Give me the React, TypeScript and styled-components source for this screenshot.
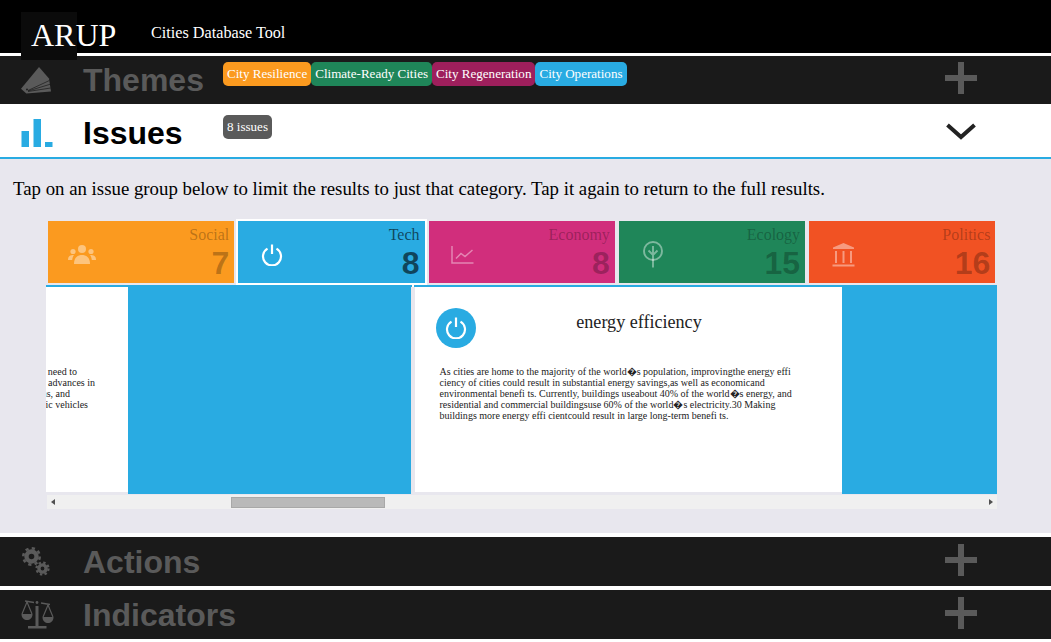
import React from "react";
import styled, { createGlobalStyle } from "styled-components";

const GlobalStyle = createGlobalStyle`
  html, body {
    margin: 0;
    padding: 0;
    background: #fff;
    overflow: hidden;
    font-family: "Liberation Serif", "Times New Roman", serif;
  }
`;

const BLUE = "#29abe2";

function FanIcon() {
  return (
    <svg width="30" height="27" viewBox="0 0 30 27">
      <polygon points="18,0 28,11.5 30,24.5 5.3,26.5 0,21.7" fill="#5a5a5a" />
      <g stroke="#1a1a1a" strokeWidth="0.7" fill="none">
        <line x1="7" y1="23.5" x2="28.4" y2="13.5" />
        <line x1="7" y1="24" x2="29" y2="17.3" />
        <line x1="7" y1="24.5" x2="29.6" y2="21" />
      </g>
      <circle cx="6" cy="22.5" r="0.9" fill="#1a1a1a" />
    </svg>
  );
}

function BarsIcon() {
  return (
    <svg width="32" height="28" viewBox="0 0 32 28" fill={BLUE}>
      <rect x="0.5" y="12" width="7.5" height="16" />
      <rect x="12.5" y="0" width="7.5" height="28" />
      <rect x="24" y="23" width="7.5" height="5" />
    </svg>
  );
}

function GearsIcon() {
  return (
    <svg width="30" height="30" viewBox="0 0 30 30" fill="none" stroke="#5a5a5a">
      <circle cx="10.5" cy="9.5" r="5" strokeWidth="4.4" />
      <circle cx="10.5" cy="9.5" r="8.2" strokeWidth="2.6" strokeDasharray="3.2 3.24" />
      <circle cx="21.5" cy="21.5" r="3.6" strokeWidth="3.4" />
      <circle cx="21.5" cy="21.5" r="6" strokeWidth="2.2" strokeDasharray="2.4 2.31" />
    </svg>
  );
}

function ScalesIcon() {
  return (
    <svg width="33" height="29" viewBox="0 0 33 29" fill="none" stroke="#5a5a5a" strokeWidth="1.2">
      <line x1="4" y1="1" x2="13" y2="2.5" strokeWidth="1.6" />
      <line x1="20" y1="3" x2="29" y2="4.5" strokeWidth="1.6" />
      <circle cx="16" cy="2.5" r="1.4" fill="#5a5a5a" stroke="none" />
      <rect x="14.5" y="6" width="3" height="20" fill="#5a5a5a" stroke="none" />
      <rect x="7" y="26" width="18.5" height="2.5" fill="#5a5a5a" stroke="none" />
      <path d="M6 2 L1 14 M6 2 L11 14" />
      <path d="M27 5 L22 17 M27 5 L32 17" />
      <path d="M0.5 14 H11.5 C11.5 22 0.5 22 0.5 14Z" fill="#5a5a5a" stroke="none" />
      <path d="M21.5 17 H32.5 C32.5 25 21.5 25 21.5 17Z" fill="#5a5a5a" stroke="none" />
    </svg>
  );
}

function PlusIcon() {
  return (
    <svg width="32" height="32" viewBox="0 0 32 32" fill="#5a5a5a">
      <rect x="13" y="0" width="6" height="32" />
      <rect x="0" y="13" width="32" height="6" />
    </svg>
  );
}

function ChevronIcon() {
  return (
    <svg width="30" height="17" viewBox="0 0 30 17" fill="none" stroke="#222" strokeWidth="4">
      <path d="M1.5 2 L15 14 L28.5 2" />
    </svg>
  );
}

function PeopleIcon() {
  return (
    <svg width="28" height="20" viewBox="0 0 28 20" fill="currentColor">
      <circle cx="14" cy="4" r="4" />
      <circle cx="5" cy="6.5" r="2.6" />
      <circle cx="23" cy="6.5" r="2.6" />
      <path d="M6 19 C6 12 10 10 14 10 C18 10 22 12 22 19Z" />
      <path d="M0 15 C0 11 2 10 6 10 C5 11.5 4.5 12.5 4.2 15Z" />
      <path d="M28 15 C28 11 26 10 22 10 C23 11.5 23.5 12.5 23.8 15Z" />
    </svg>
  );
}

function PowerIcon({ size = 22 }: { size?: number }) {
  return (
    <svg width={size} height={size} viewBox="0 0 22 22" fill="none" stroke="currentColor" strokeWidth="2.2">
      <path d="M6.5 4.6 A9 9 0 1 0 15.5 4.6" />
      <line x1="11" y1="0.5" x2="11" y2="10" />
    </svg>
  );
}

function ChartIcon() {
  return (
    <svg width="23" height="18" viewBox="0 0 23 18" fill="none" stroke="currentColor" strokeWidth="1.5">
      <path d="M1 0 V17 H22.5" />
      <path d="M5 12.5 L10 7.5 L14 10.5 L21.5 4" />
    </svg>
  );
}

function TreeIcon() {
  return (
    <svg width="22" height="27" viewBox="0 0 22 27" fill="none" stroke="currentColor" strokeWidth="1.9">
      <circle cx="11" cy="10" r="9" />
      <path d="M11 5 V26.5 M6.5 9.5 L11 14 L15.5 9.5" />
    </svg>
  );
}

function BankIcon() {
  return (
    <svg width="23" height="24" viewBox="0 0 23 24" fill="currentColor">
      <path d="M11.5 0 L22 4.5 V6 H1 V4.5Z" />
      <rect x="3" y="8" width="2" height="12" />
      <rect x="10.5" y="8" width="2" height="12" />
      <rect x="18" y="8" width="2" height="12" />
      <rect x="0.5" y="21.5" width="22" height="2" />
    </svg>
  );
}

const Page = styled.div`
  width: 1051px;
  height: 642px;
  overflow: hidden;
  background: #fff;
`;

const Header = styled.header`
  height: 53px;
  background: #000;
  color: #fff;
  display: flex;
  align-items: flex-start;
`;

const Logo = styled.div`
  width: 56px;
  height: 48px;
  margin: 12px 0 0 21px;
  background: #0b0b0b;
  font-size: 32px;
  line-height: 47px;
  padding-left: 10px;
  box-sizing: border-box;
  white-space: nowrap;
`;

const AppTitle = styled.div`
  margin: 24px 0 0 74px;
  font-size: 16.2px;
  line-height: 18px;
`;

const Bar = styled.section<{ $open?: boolean; $gap?: number; $height: number }>`
  display: flex;
  align-items: center;
  height: ${(p) => p.$height}px;
  margin-top: ${(p) => p.$gap ?? 0}px;
  padding-top: ${(p) => (p.$open ? 4 : 0)}px;
  box-sizing: border-box;
  background: ${(p) => (p.$open ? "#fff" : "#1a1a1a")};
  color: ${(p) => (p.$open ? "#000" : "#5a5a5a")};
`;

const BarIcon = styled.div`
  width: 83px;
  padding-left: 21px;
  box-sizing: border-box;
  display: flex;
`;

const BarTitle = styled.h2`
  width: 140px;
  margin: 0;
  font-family: "Liberation Sans", Arial, sans-serif;
  font-size: 32px;
  font-weight: 700;
  line-height: 48px;
`;

const Badges = styled.div<{ $top?: number }>`
  flex: 1;
  align-self: flex-start;
  display: flex;
  margin-top: ${(p) => p.$top ?? 6}px;
`;

const Badge = styled.span<{ $color: string }>`
  padding: 0 4px;
  height: 24px;
  line-height: 24px;
  border-radius: 5px;
  background: ${(p) => p.$color};
  color: #fff;
  font-size: 13.07px;
  white-space: nowrap;
`;

const Toggle = styled.div<{ $top: number }>`
  width: 32px;
  margin: ${(p) => p.$top}px 74px 0 0;
  align-self: flex-start;
  display: flex;
  justify-content: center;
`;

const Content = styled.div`
  height: 374px;
  border-top: 2px solid ${BLUE};
  box-sizing: content-box;
  background: #e8e7ee;
  overflow: hidden;
`;

const Intro = styled.p`
  margin: 18px 0 20px 13px;
  font-size: 18.82px;
  line-height: 24px;
  color: #000;
`;

const Tiles = styled.div`
  display: grid;
  grid-template-columns: repeat(5, 1fr);
  gap: 4px;
  width: 947.4px;
  margin-left: 48px;
`;

const Tile = styled.div<{ $color: string; $active?: boolean }>`
  height: 62px;
  display: flex;
  align-items: center;
  justify-content: space-between;
  padding: 0 5px 0 14px;
  background: ${(p) => p.$color};
  color: ${(p) => (p.$active ? "rgba(0,0,0,.6)" : "rgba(0,0,0,.27)")};
  box-shadow: ${(p) => (p.$active ? "0 0 0 2px #fff" : "none")};
`;

const TileIcon = styled.div<{ $active?: boolean }>`
  width: 40px;
  margin-top: 5px;
  display: flex;
  justify-content: center;
  color: ${(p) => (p.$active ? "#fff" : "rgba(255,255,255,.42)")};
`;

const TileText = styled.div`
  text-align: right;
`;

const TileLabel = styled.div`
  font-size: 16px;
  line-height: 18px;
  margin-top: 3px;
`;

const TileCount = styled.div`
  font-family: "Liberation Sans", Arial, sans-serif;
  font-size: 32px;
  font-weight: 700;
  line-height: 36px;
  margin-top: 1px;
`;

const Strip = styled.div`
  display: flex;
  width: 951px;
  height: 209px;
  margin: 2px 0 0 46px;
  padding-top: 2px;
  box-sizing: border-box;
  background: ${BLUE};
`;

const Card = styled.article<{ $width: number; $spaceAfter?: number }>`
  position: relative;
  width: ${(p) => p.$width}px;
  margin-right: ${(p) => p.$spaceAfter ?? 0}px;
  flex: none;
  box-sizing: border-box;
  background: #fff;
  border-bottom: 2px solid #e8e7ee;
`;

const ClippedBody = styled.div`
  height: 100%;
  overflow: hidden;
  padding-top: 79px;
  box-sizing: border-box;
`;

const ClippedLine = styled.div<{ $end: number }>`
  width: ${(p) => p.$end}px;
  display: flex;
  justify-content: flex-end;
  white-space: nowrap;
  font-size: 10px;
  line-height: 11px;
  color: #222;
`;

const Separator = styled.div`
  width: 4px;
  flex: none;
  background: #e8e7ee;
  position: relative;

  &::before {
    content: "";
    position: absolute;
    left: 1px;
    top: -2px;
    width: 2px;
    height: 2px;
    background: #fff;
  }
`;

const CardHead = styled.div`
  display: flex;
  padding: 21px 40px 0 21px;
`;

const CardBadge = styled.div`
  width: 40px;
  height: 40px;
  flex: none;
  border-radius: 50%;
  background: ${BLUE};
  color: #fff;
  display: flex;
  align-items: center;
  justify-content: center;
`;

const CardTitle = styled.h3`
  flex: 1;
  margin: 3px 0 0;
  text-align: center;
  font-size: 18.1px;
  font-weight: 400;
  line-height: 22px;
  color: #222;
`;

const CardText = styled.p`
  margin: 18px 37px 0 24.5px;
  font-size: 10.03px;
  line-height: 11px;
  color: #222;
`;

const ScrollBar = styled.div`
  position: relative;
  width: 950px;
  height: 14px;
  margin: 1px 0 0 47px;
  background: #f0f0f0;
`;

const ScrollArrow = styled.span<{ $side: "left" | "right" }>`
  position: absolute;
  top: 4px;
  ${(p) => p.$side}: 4px;
  width: 0;
  height: 0;
  border-top: 3.5px solid transparent;
  border-bottom: 3.5px solid transparent;
  ${(p) => (p.$side === "left" ? "border-right" : "border-left")}: 4px solid #505050;
`;

const ScrollThumb = styled.div`
  position: absolute;
  left: 184px;
  top: 2px;
  width: 154px;
  height: 11px;
  box-sizing: border-box;
  background: #b9b9b9;
  border: 1px solid #a8a8a8;
`;

const themes = [
  { label: "City Resilience", color: "#fb9a1f" },
  { label: "Climate-Ready Cities", color: "#1f8659" },
  { label: "City Regeneration", color: "#9e1f5c" },
  { label: "City Operations", color: "#29abe2" },
];

const issues = [
  { label: "Social", count: 7, color: "#fb9a1f", icon: <PeopleIcon /> },
  { label: "Tech", count: 8, color: "#29abe2", icon: <PowerIcon />, active: true },
  { label: "Economy", count: 8, color: "#d12e7c", icon: <ChartIcon /> },
  { label: "Ecology", count: 15, color: "#1f8659", icon: <TreeIcon /> },
  { label: "Politics", count: 16, color: "#f15223", icon: <BankIcon /> },
];

export default function App() {
  return (
    <Page>
      <GlobalStyle />
      <Header>
        <Logo>ARUP</Logo>
        <AppTitle>Cities Database Tool</AppTitle>
      </Header>

      <Bar $height={48} $gap={3}>
        <BarIcon><FanIcon /></BarIcon>
        <BarTitle>Themes</BarTitle>
        <Badges>
          {themes.map((t) => (
            <Badge key={t.label} $color={t.color}>{t.label}</Badge>
          ))}
        </Badges>
        <Toggle $top={6}><PlusIcon /></Toggle>
      </Bar>

      <Bar $height={53} $open>
        <BarIcon><BarsIcon /></BarIcon>
        <BarTitle>Issues</BarTitle>
        <Badges $top={7}>
          <Badge $color="#5a5a5a">8 issues</Badge>
        </Badges>
        <Toggle $top={15}><ChevronIcon /></Toggle>
      </Bar>

      <Content>
        <Intro>
          Tap on an issue group below to limit the results to just that category. Tap it again to return to the full results.
        </Intro>
        <Tiles>
          {issues.map((i) => (
            <Tile key={i.label} $color={i.color} $active={i.active}>
              <TileIcon $active={i.active}>{i.icon}</TileIcon>
              <TileText>
                <TileLabel>{i.label}</TileLabel>
                <TileCount>{i.count}</TileCount>
              </TileText>
            </Tile>
          ))}
        </Tiles>
        <Strip>
          <Card $width={82} $spaceAfter={283}>
            <ClippedBody>
              <ClippedLine $end={31}>will need to</ClippedLine>
              <ClippedLine $end={49}>and advances in</ClippedLine>
              <ClippedLine $end={24}>systems, and</ClippedLine>
              <ClippedLine $end={42}>electric vehicles</ClippedLine>
            </ClippedBody>
          </Card>
          <Separator />
          <Card $width={427}>
            <CardHead>
              <CardBadge><PowerIcon size={22} /></CardBadge>
              <CardTitle>energy efficiency</CardTitle>
            </CardHead>
            <CardText>
              As cities are home to the majority of the world{"\uFFFD"}s population, improvingthe energy effi ciency of cities could result in substantial energy savings,as well as economicand environmental benefi ts. Currently, buildings useabout 40% of the world{"\uFFFD"}s energy, and residential and commercial buildingsuse 60% of the world{"\uFFFD"}s electricity.30 Making buildings more energy effi cientcould result in large long-term benefi ts.
            </CardText>
          </Card>
        </Strip>
        <ScrollBar>
          <ScrollArrow $side="left" />
          <ScrollThumb />
          <ScrollArrow $side="right" />
        </ScrollBar>
      </Content>

      <Bar $height={49} $gap={4}>
        <BarIcon><GearsIcon /></BarIcon>
        <BarTitle>Actions</BarTitle>
        <Badges />
        <Toggle $top={7}><PlusIcon /></Toggle>
      </Bar>

      <Bar $height={49} $gap={4}>
        <BarIcon><ScalesIcon /></BarIcon>
        <BarTitle>Indicators</BarTitle>
        <Badges />
        <Toggle $top={7}><PlusIcon /></Toggle>
      </Bar>
    </Page>
  );
}
